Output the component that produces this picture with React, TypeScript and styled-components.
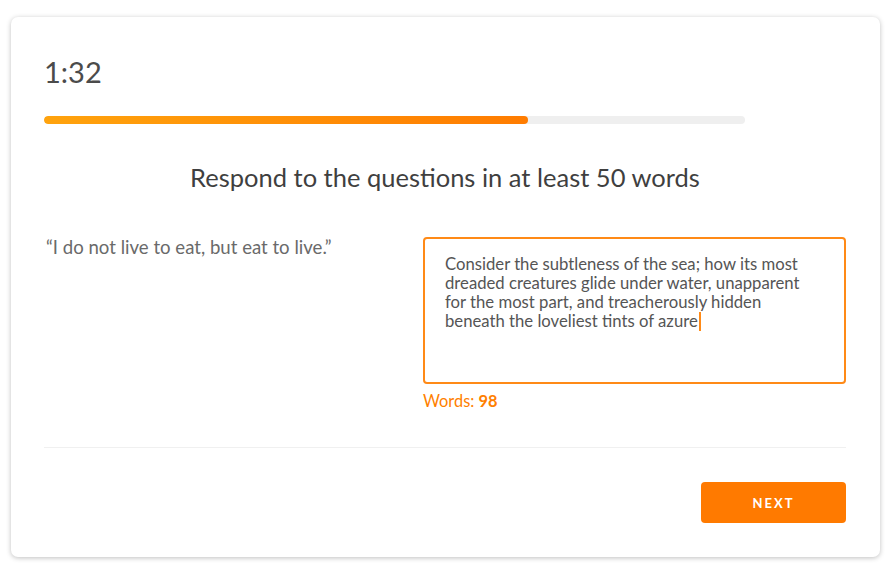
import React from "react";
import styled, { createGlobalStyle } from "styled-components";

const Global = createGlobalStyle`
  html, body { margin: 0; padding: 0; background: #ffffff; }
  body { font-family: Lato, "Open Sans", sans-serif; }
  * { box-sizing: border-box; }
`;

const Page = styled.div`
  padding: 17px 10px 14px 11px;
  height: 571px;
`;

const Card = styled.div`
  height: 540px;
  background: #fff;
  border-radius: 7px;
  box-shadow: 0 1px 5px rgba(0, 0, 0, 0.25);
  padding: 38px 34px 0 33px;
  display: flex;
  flex-direction: column;
`;

const Timer = styled.div`
  font-size: 29px;
  color: #4b4b4b;
  line-height: 34px;
  height: 34px;
`;

const Track = styled.div`
  margin-top: 27px;
  width: 701px;
  height: 8px;
  border-radius: 4px;
  background: #efefef;
  overflow: hidden;
`;

const Fill = styled.div`
  height: 100%;
  border-radius: 4px;
  background: linear-gradient(90deg, #ffa30d 0%, #ff7c00 100%);
`;

const Title = styled.h1`
  margin: 37px 0 0;
  font-weight: 400;
  font-size: 25.5px;
  line-height: 32px;
  color: #3f3f3f;
  text-align: center;
`;

const Body = styled.div`
  margin-top: 44px;
  display: flex;
  justify-content: space-between;
`;

const Quote = styled.div`
  font-size: 18.6px;
  color: #6a6a6a;
  padding: 0 0 0 2px;
  line-height: 20px;
`;

const AnswerCol = styled.div`
  width: 423px;
  display: flex;
  flex-direction: column;
`;

const Box = styled.div`
  height: 147px;
  border: 2px solid #ff8a17;
  border-radius: 4px;
  padding: 16px 20px;
  font-size: 16.7px;
  line-height: 19px;
  color: #555;
`;

const Caret = styled.span`
  display: inline-block;
  width: 2px;
  height: 19px;
  background: #ff8a17;
  vertical-align: -4px;
  margin-left: 1px;
`;

const Count = styled.div`
  margin-top: 8px;
  font-size: 16.4px;
  color: #ff7f00;
  line-height: 18px;
  b { font-weight: 700; }
`;

const Divider = styled.hr`
  margin: 37px 0 0;
  border: 0;
  height: 1px;
  background: #f0f0f0;
`;

const Footer = styled.div`
  margin-top: 34px;
  display: flex;
  justify-content: flex-end;
`;

const Next = styled.button`
  width: 145px;
  height: 41px;
  border: 0;
  border-radius: 4px;
  background: #ff7a00;
  color: #fff;
  font-family: Lato, sans-serif;
  font-weight: 700;
  font-size: 13px;
  letter-spacing: 2px;
`;

export default function App() {
  return (
    <Page>
      <Global />
      <Card>
        <Timer>1:32</Timer>
        <Track>
          <Fill style={{ width: `${(484 / 701) * 100}%` }} />
        </Track>
        <Title>Respond to the questions in at least 50 words</Title>
        <Body>
          <Quote>“I do not live to eat, but eat to live.”</Quote>
          <AnswerCol>
            <Box>
              Consider the subtleness of the sea; how its most dreaded creatures glide under water, unapparent for the most part, and treacherously hidden beneath the loveliest tints of azure
              <Caret />
            </Box>
            <Count>
              Words: <b>98</b>
            </Count>
          </AnswerCol>
        </Body>
        <Divider />
        <Footer>
          <Next>NEXT</Next>
        </Footer>
      </Card>
    </Page>
  );
}
